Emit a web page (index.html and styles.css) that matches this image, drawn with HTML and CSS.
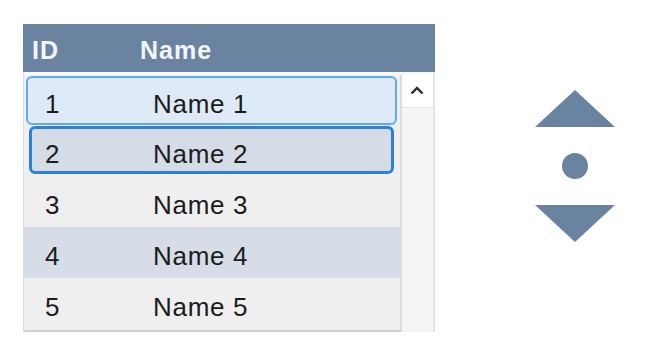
FILE: index.html
```html
<html lang="en">
	<head>
		<meta charset="UTF-8">
		<title>Grid</title>
		<link rel="stylesheet" href="styles.css">
	</head>
	<body>
		<div class="page">
			<div class="grid">
				<div class="head">
					<span class="col-id">ID</span>
					<span class="col-name">Name</span>
				</div>
				<div class="body">
					<div class="rows">
						<div class="row hover"><span class="col-id">1</span><span class="col-name">Name 1</span></div>
						<div class="row focus"><span class="col-id">2</span><span class="col-name">Name 2</span></div>
						<div class="row"><span class="col-id">3</span><span class="col-name">Name 3</span></div>
						<div class="row alt"><span class="col-id">4</span><span class="col-name">Name 4</span></div>
						<div class="row"><span class="col-id">5</span><span class="col-name">Name 5</span></div>
					</div>
					<div class="scroll">
						<div class="scroll-up">
							<svg width="14" height="9" viewBox="0 0 14 9"><polyline points="1.5,7.5 7,2 12.5,7.5" fill="none" stroke="#2a2a2a" stroke-width="2.4"/></svg>
						</div>
					</div>
				</div>
			</div>
			<div class="nav">
				<svg width="80" height="37" viewBox="0 0 80 37"><polygon points="40,0 80,37 0,37" fill="#6a83a0"/></svg>
				<svg width="26" height="26" viewBox="0 0 26 26"><circle cx="13" cy="13" r="13" fill="#6a83a0"/></svg>
				<svg width="80" height="37" viewBox="0 0 80 37"><polygon points="0,0 80,0 40,37" fill="#6a83a0"/></svg>
			</div>
		</div>
	</body>
</html>
```
FILE: styles.css
```css
body {
	margin: 0;
	background-color: white;
	font-family: "Liberation Sans", Arial, sans-serif;
}
div.page {
	display: flex;
	flex-direction: row;
	align-items: flex-start;
	padding: 24px 0 0 23px;
}
div.grid {
	width: 412px;
}
div.head {
	height: 48px;
	display: flex;
	align-items: center;
	padding: 4px 0 0 9px;
	box-sizing: border-box;
	background-color: #6a83a0;
	color: #f2f6fa;
	font-weight: bold;
	font-size: 25px;
	letter-spacing: 1px;
}
div.head > span.col-id {
	width: 108px;
}
div.body {
	display: flex;
	flex-direction: row;
	height: 260px;
	padding-top: 3px;
	border-left: 1px solid #d8dde3;
	border-right: 2px solid #e4e4e4;
	box-sizing: border-box;
	background-color: #f7f9fb;
}
div.rows {
	width: 376px;
	background-color: #efefef;
	border-right: 2px solid #dcdcdc;
	border-bottom: 2px solid #c9d3de;
	height: 255px;
}
div.row {
	height: 51px;
	display: flex;
	align-items: center;
	padding: 8px 0 0 21px;
	box-sizing: border-box;
	color: #1c1c1c;
	font-size: 26px;
	letter-spacing: 0.7px;
}
div.row > span.col-id {
	width: 108px;
}
div.row.alt {
	background-color: #d6dde6;
}
div.row.hover {
	height: 49px;
	margin: 1px 3px 1px 2px;
	padding-left: 17px;
	border: 2px solid #62a9ee;
	border-radius: 6px;
	background-color: #dfeaf8;
}
div.row.focus {
	height: 48px;
	margin: 1px 6px 2px 5px;
	padding-left: 13px;
	border: 3px solid #2b81d8;
	border-radius: 6px;
	background-color: #d5dce5;
}
div.scroll {
	flex: 1;
	background-color: #f5f5f5;
}
div.scroll-up {
	height: 33px;
	display: flex;
	align-items: center;
	justify-content: center;
	background-color: white;
	border-bottom: 1px solid #e4e4e4;
	padding: 0 2px 2px 0;
	box-sizing: border-box;
}
div.nav {
	display: flex;
	flex-direction: column;
	align-items: center;
	gap: 26px;
	margin: 66px 0 0 100px;
}
div.nav > svg {
	display: block;
}
```
